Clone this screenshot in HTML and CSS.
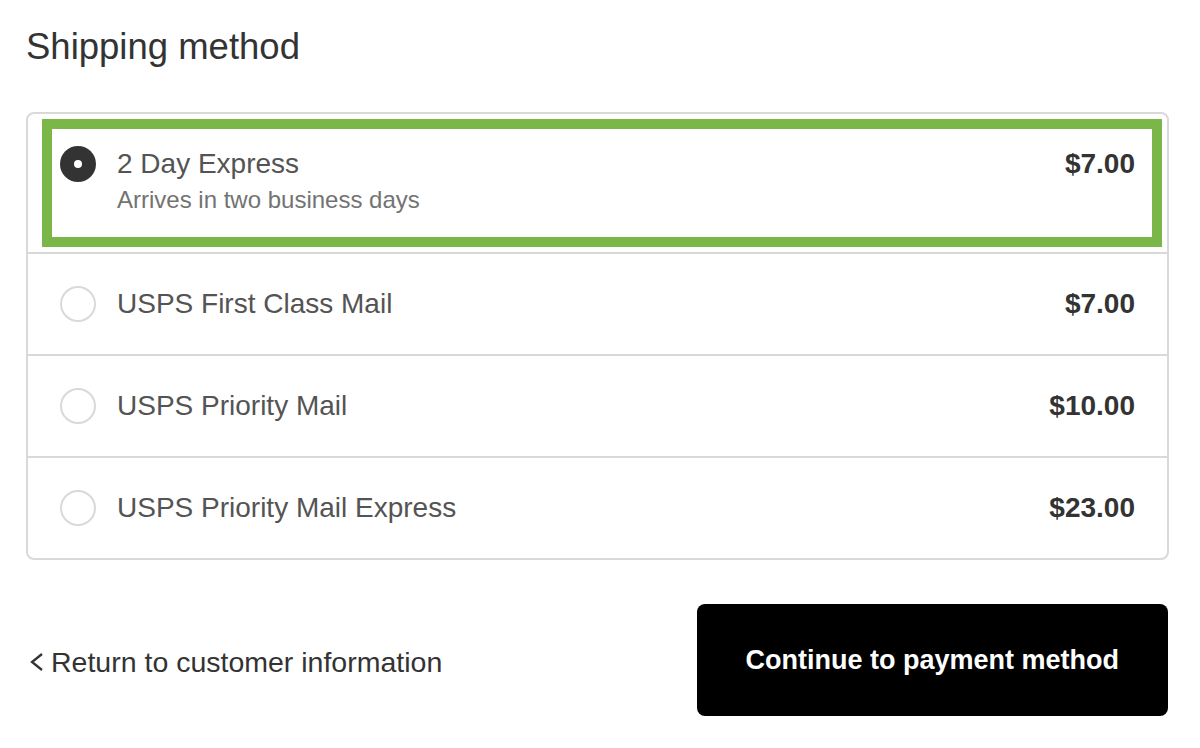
FILE: index.html
```html
<!DOCTYPE html>

<html>

<head>
    <meta charset="UTF-8" />
    <meta name="viewport" content="width=device-width, initial-scale=1.0">
    <link rel="stylesheet" href="styles.css">
</head>

<body>

    <main class="page">

        <h2 class="section-title">Shipping method</h2>

        <div class="rates">

            <div class="rate rate--selected">
                <label class="rate-inner">
                    <span class="radio radio--checked"></span>
                    <span class="rate-text">
                        <span class="rate-name">2 Day Express</span>
                        <span class="rate-note">Arrives in two business days</span>
                    </span>
                    <span class="rate-price">$7.00</span>
                </label>
            </div>

            <div class="rate">
                <span class="radio"></span>
                <span class="rate-name">USPS First Class Mail</span>
                <span class="rate-price">$7.00</span>
            </div>

            <div class="rate">
                <span class="radio"></span>
                <span class="rate-name">USPS Priority Mail</span>
                <span class="rate-price">$10.00</span>
            </div>

            <div class="rate">
                <span class="radio"></span>
                <span class="rate-name">USPS Priority Mail Express</span>
                <span class="rate-price">$23.00</span>
            </div>

        </div>

        <div class="step-footer">

            <a class="back-link" href="#">
                <svg width="15" height="20" viewBox="0 0 15 20">
                    <polyline points="13,2 3,10 13,18" fill="none" stroke="#333" stroke-width="2.3"/>
                </svg>
                Return to customer information
            </a>

            <button class="btn">Continue to payment method</button>

        </div>

    </main>

</body>

</html>
```

FILE: styles.css
```css
* {
    margin: 0;
    padding: 0;
    box-sizing: border-box;
}

body {
    font-family: "Liberation Sans", Arial, Helvetica, sans-serif;
    color: #333;
    background: #fff;
}

.page {
    padding: 23px 31px 0 26px;
}

.section-title {
    font-size: 36.5px;
    font-weight: normal;
    line-height: 47px;
    margin-bottom: 42px;
    color: #333;
}

.rates {
    border: 2px solid #d9d9d9;
    border-radius: 8px;
}

.rate {
    display: flex;
    align-items: center;
    padding: 32px;
}

.rate + .rate {
    border-top: 2px solid #d9d9d9;
}

.rate--selected {
    display: block;
    padding: 5px 5px 5px 14px;
}

.rate-inner {
    display: flex;
    align-items: flex-start;
    border: 10px solid #7ab648;
    padding: 17px 17px 19px 8px;
}

.radio {
    flex-shrink: 0;
    width: 36px;
    height: 36px;
    border: 2px solid #d9d9d9;
    border-radius: 50%;
    margin-right: 21px;
    position: relative;
}

.radio--checked {
    border: none;
    background: #333;
}

.radio--checked::after {
    content: "";
    position: absolute;
    left: 14px;
    top: 14px;
    width: 8px;
    height: 8px;
    border-radius: 50%;
    background: #fff;
}

.rate-text {
    display: flex;
    flex-direction: column;
}

.rate-name {
    font-size: 28px;
    line-height: 36px;
    color: #545454;
}

.rate-note {
    font-size: 24px;
    line-height: 36px;
    color: #737373;
}

.rate-price {
    margin-left: auto;
    font-size: 28px;
    line-height: 36px;
    font-weight: bold;
    color: #333;
}

.step-footer {
    margin-top: 44px;
    display: flex;
    align-items: center;
    justify-content: space-between;
}

.back-link {
    display: flex;
    align-items: center;
    padding: 4px 0 0 3px;
    font-size: 28.5px;
    line-height: 36px;
    color: #333;
    text-decoration: none;
}

.back-link svg {
    margin-right: 7px;
}

.btn {
    background: #000;
    color: #fff;
    border: none;
    border-radius: 8px;
    font-family: inherit;
    font-size: 27px;
    font-weight: bold;
    line-height: 36px;
    padding: 38px 49px;
    margin-right: 1px;
}
```
